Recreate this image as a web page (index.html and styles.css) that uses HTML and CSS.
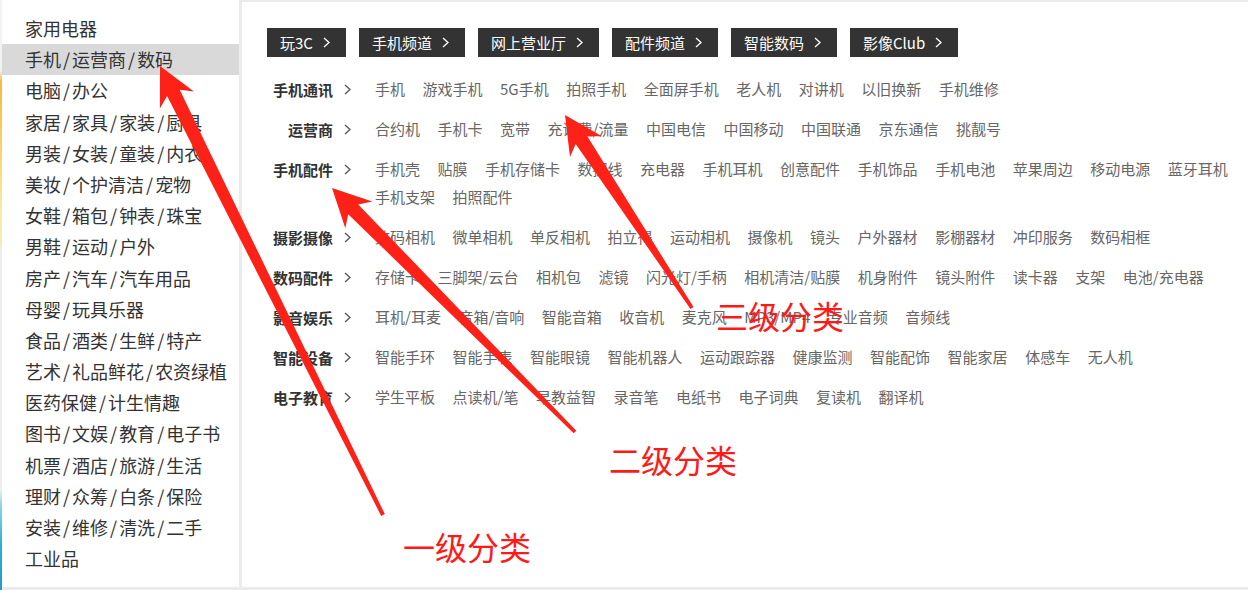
FILE: index.html
```html
<!DOCTYPE html>
<html lang="zh-CN">
<head>
<meta charset="utf-8">
<title>分类菜单</title>
<link rel="stylesheet" href="styles.css">
</head>
<body>
<div class="page">
  <div class="edge"></div>
  <ul class="sidebar">
    <li>家用电器</li>
    <li class="active">手机<span class="sep">/</span>运营商<span class="sep">/</span>数码</li>
    <li>电脑<span class="sep">/</span>办公</li>
    <li>家居<span class="sep">/</span>家具<span class="sep">/</span>家装<span class="sep">/</span>厨具</li>
    <li>男装<span class="sep">/</span>女装<span class="sep">/</span>童装<span class="sep">/</span>内衣</li>
    <li>美妆<span class="sep">/</span>个护清洁<span class="sep">/</span>宠物</li>
    <li>女鞋<span class="sep">/</span>箱包<span class="sep">/</span>钟表<span class="sep">/</span>珠宝</li>
    <li>男鞋<span class="sep">/</span>运动<span class="sep">/</span>户外</li>
    <li>房产<span class="sep">/</span>汽车<span class="sep">/</span>汽车用品</li>
    <li>母婴<span class="sep">/</span>玩具乐器</li>
    <li>食品<span class="sep">/</span>酒类<span class="sep">/</span>生鲜<span class="sep">/</span>特产</li>
    <li>艺术<span class="sep">/</span>礼品鲜花<span class="sep">/</span>农资绿植</li>
    <li>医药保健<span class="sep">/</span>计生情趣</li>
    <li>图书<span class="sep">/</span>文娱<span class="sep">/</span>教育<span class="sep">/</span>电子书</li>
    <li>机票<span class="sep">/</span>酒店<span class="sep">/</span>旅游<span class="sep">/</span>生活</li>
    <li>理财<span class="sep">/</span>众筹<span class="sep">/</span>白条<span class="sep">/</span>保险</li>
    <li>安装<span class="sep">/</span>维修<span class="sep">/</span>清洗<span class="sep">/</span>二手</li>
    <li>工业品</li>
  </ul>
  <div class="panel">
    <div class="tabs">
      <a class="tab">玩3C<svg class="tchev" viewBox="0 0 7 11"><path d="M1 1l5 4.5-5 4.5"/></svg></a>
      <a class="tab">手机频道<svg class="tchev" viewBox="0 0 7 11"><path d="M1 1l5 4.5-5 4.5"/></svg></a>
      <a class="tab">网上营业厅<svg class="tchev" viewBox="0 0 7 11"><path d="M1 1l5 4.5-5 4.5"/></svg></a>
      <a class="tab">配件频道<svg class="tchev" viewBox="0 0 7 11"><path d="M1 1l5 4.5-5 4.5"/></svg></a>
      <a class="tab">智能数码<svg class="tchev" viewBox="0 0 7 11"><path d="M1 1l5 4.5-5 4.5"/></svg></a>
      <a class="tab">影像Club<svg class="tchev" viewBox="0 0 7 11"><path d="M1 1l5 4.5-5 4.5"/></svg></a>
    </div>
    <div class="cats">
      <dl class="cat">
        <dt>手机通讯<svg class="chev" viewBox="0 0 7 11"><path d="M1 1l5 4.5-5 4.5"/></svg></dt>
        <dd><a>手机</a><a>游戏手机</a><a>5G手机</a><a>拍照手机</a><a>全面屏手机</a><a>老人机</a><a>对讲机</a><a>以旧换新</a><a>手机维修</a></dd>
      </dl>
      <dl class="cat">
        <dt>运营商<svg class="chev" viewBox="0 0 7 11"><path d="M1 1l5 4.5-5 4.5"/></svg></dt>
        <dd><a>合约机</a><a>手机卡</a><a>宽带</a><a>充话费/流量</a><a>中国电信</a><a>中国移动</a><a>中国联通</a><a>京东通信</a><a>挑靓号</a></dd>
      </dl>
      <dl class="cat">
        <dt>手机配件<svg class="chev" viewBox="0 0 7 11"><path d="M1 1l5 4.5-5 4.5"/></svg></dt>
        <dd><a>手机壳</a><a>贴膜</a><a>手机存储卡</a><a>数据线</a><a>充电器</a><a>手机耳机</a><a>创意配件</a><a>手机饰品</a><a>手机电池</a><a>苹果周边</a><a>移动电源</a><a>蓝牙耳机</a><a>手机支架</a><a>拍照配件</a></dd>
      </dl>
      <dl class="cat">
        <dt>摄影摄像<svg class="chev" viewBox="0 0 7 11"><path d="M1 1l5 4.5-5 4.5"/></svg></dt>
        <dd><a>数码相机</a><a>微单相机</a><a>单反相机</a><a>拍立得</a><a>运动相机</a><a>摄像机</a><a>镜头</a><a>户外器材</a><a>影棚器材</a><a>冲印服务</a><a>数码相框</a></dd>
      </dl>
      <dl class="cat">
        <dt>数码配件<svg class="chev" viewBox="0 0 7 11"><path d="M1 1l5 4.5-5 4.5"/></svg></dt>
        <dd><a>存储卡</a><a>三脚架/云台</a><a>相机包</a><a>滤镜</a><a>闪光灯/手柄</a><a>相机清洁/贴膜</a><a>机身附件</a><a>镜头附件</a><a>读卡器</a><a>支架</a><a>电池/充电器</a></dd>
      </dl>
      <dl class="cat">
        <dt>影音娱乐<svg class="chev" viewBox="0 0 7 11"><path d="M1 1l5 4.5-5 4.5"/></svg></dt>
        <dd><a>耳机/耳麦</a><a>音箱/音响</a><a>智能音箱</a><a>收音机</a><a>麦克风</a><a>MP3/MP4</a><a>专业音频</a><a>音频线</a></dd>
      </dl>
      <dl class="cat">
        <dt>智能设备<svg class="chev" viewBox="0 0 7 11"><path d="M1 1l5 4.5-5 4.5"/></svg></dt>
        <dd><a>智能手环</a><a>智能手表</a><a>智能眼镜</a><a>智能机器人</a><a>运动跟踪器</a><a>健康监测</a><a>智能配饰</a><a>智能家居</a><a>体感车</a><a>无人机</a></dd>
      </dl>
      <dl class="cat">
        <dt>电子教育<svg class="chev" viewBox="0 0 7 11"><path d="M1 1l5 4.5-5 4.5"/></svg></dt>
        <dd><a>学生平板</a><a>点读机/笔</a><a>早教益智</a><a>录音笔</a><a>电纸书</a><a>电子词典</a><a>复读机</a><a>翻译机</a></dd>
      </dl>
    </div>
  </div>
</div>

<div class="annot">
  <svg class="arrows" width="1248" height="590" viewBox="0 0 1248 590">
    <polygon points="384.8,514.1 179.7,89.8 193.9,91.5 160,66 159.9,108.5 167.1,96.0 381.2,515.9"/>
    <polygon points="576.3,430.7 358.2,204.4 372.3,201.5 332,188 345.3,228.3 348.2,214.2 573.7,433.3"/>
    <polygon points="693.5,307.0 587.3,136.3 601.8,136.3 565,115 570.0,157.1 575.7,143.9 690.5,309.0"/>
  </svg>
  <span class="label l3">三级分类</span>
  <span class="label l2">二级分类</span>
  <span class="label l1">一级分类</span>
</div>
</body>
</html>
```

FILE: styles.css
```css
* {
  box-sizing: border-box;
}

body {
  margin: 0;
  width: 1248px;
  height: 590px;
  overflow: hidden;
  position: relative;
  background: #ebebeb;
  font-family: "Noto Sans CJK SC", "Noto Sans", sans-serif;
}

.page {
  display: flex;
  height: 587px;
}

.edge {
  width: 2px;
  height: 590px;
  background: linear-gradient(to bottom,
    #f2f2f2 0, #f2f2f2 70px,
    #f8b93a 82px, #fbd36a 150px, #fde9a8 215px,
    #f6e9b0 240px, #eeeeee 252px,
    #eeeeee 490px, #8ad6e8 505px, #2bb0d3 545px, #1b9ec4 590px);
}

.sidebar {
  list-style: none;
  margin: 0 3px 0 0;
  padding: 13px 0 0 0;
  width: 237px;
  background: #fff;
}

.sidebar li {
  height: 31.2px;
  line-height: 31.2px;
  padding-left: 23px;
  font-size: 18px;
  color: #333;
  white-space: nowrap;
}

.sidebar li.active {
  background: #d9d9d9;
}

.sep {
  margin: 0 2px;
}

.panel {
  flex: 1;
  background: #fff;
  margin-top: 2px;
  padding: 26px 8px 0 25px;
}

.tabs {
  display: flex;
  gap: 13px;
}

.tab {
  display: flex;
  align-items: center;
  height: 29px;
  padding: 0 16px 0 13px;
  background: #333;
  color: #fff;
  font-size: 15px;
  white-space: nowrap;
}

.tchev {
  width: 7px;
  height: 11px;
  margin-left: 10px;
  fill: none;
  stroke: #fff;
  stroke-width: 1.3;
}

.cats {
  margin-top: 18px;
}

.cat {
  display: flex;
  margin: 0 0 12px 0;
}

.cat dt {
  flex: none;
  width: 84px;
  display: flex;
  justify-content: flex-end;
  align-items: center;
  height: 28px;
  font-size: 15px;
  font-weight: bold;
  color: #333;
  white-space: nowrap;
}

.chev {
  width: 7px;
  height: 11px;
  margin-left: 11px;
  fill: none;
  stroke: #555;
  stroke-width: 1.3;
}

.cat dd {
  margin: 0 0 0 24px;
  width: 865px;
  display: flex;
  flex-wrap: wrap;
  column-gap: 17.5px;
}

.cat dd a {
  line-height: 28px;
  font-size: 15px;
  color: #666;
  white-space: nowrap;
}

.annot {
  position: absolute;
  left: 0;
  top: 0;
  width: 1248px;
  height: 590px;
  pointer-events: none;
}

.arrows {
  position: absolute;
  left: 0;
  top: 0;
}

.arrows polygon {
  fill: #fe2117;
}

.label {
  position: absolute;
  font-size: 32px;
  line-height: 32px;
  color: #ff1a1a;
  white-space: nowrap;
}

.l3 {
  left: 716px;
  top: 299px;
}

.l2 {
  left: 609px;
  top: 443px;
}

.l1 {
  left: 403px;
  top: 530px;
}
```
